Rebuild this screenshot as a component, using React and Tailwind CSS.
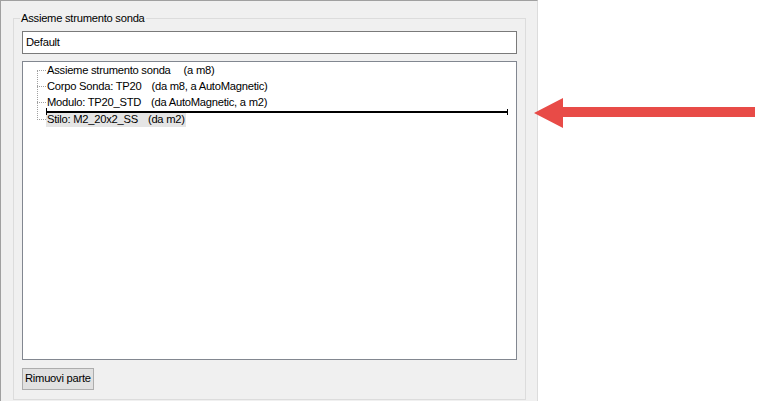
import React from "react"

const rows = [
  { name: "Assieme strumento sonda", info: "(a m8)", gap: "ml-[13px]" },
  { name: "Corpo Sonda: TP20", info: "(da m8, a AutoMagnetic)", gap: "ml-[10px]" },
  { name: "Modulo: TP20_STD", info: "(da AutoMagnetic, a m2)", gap: "ml-[10px]" },
  { name: "Stilo: M2_20x2_SS", info: "(da m2)", gap: "ml-[10px]", selected: true },
]

const App = () => {
  return (
    <div
      className="relative w-[763px] h-[401px] bg-white flex text-[11.2px] tracking-[-0.25px] text-black overflow-hidden"
      style={{ fontFamily: '"Liberation Sans", Arial, sans-serif' }}
    >
      {/* Panel */}
      <div className="w-[538px] h-full bg-[#f0f0f0] border-t border-l border-t-[#a0a0a0] border-l-[#a0a0a0] border-r border-r-[#dcdcdc] pl-[12px] pt-[9px]">
        <fieldset className="w-[513px] h-[390px] border border-[#dcdcdc] px-[8px] pt-[5px] flex flex-col">
          <legend className="ml-[-2px] px-[1px] leading-[16px]">Assieme strumento sonda</legend>

          {/* Config name */}
          <div className="h-[23px] border border-[#7a7a7a] bg-white pl-[3px] pt-[1px] flex items-center leading-none">
            Default
          </div>

          {/* Tree */}
          <div className="relative mt-[7px] h-[299px] border border-[#828790] bg-white">
            <div className="absolute left-[14px] top-[8px] h-[50px] border-l border-dotted border-[#a0a0a0]"></div>
            {rows.map((r, i) => (
              <div key={i} className="h-[16.4px] flex items-center">
                <div className="w-[9px] ml-[14px] border-t border-dotted border-[#a0a0a0]"></div>
                <span
                  className={
                    "flex px-[1px] leading-[15px] " + (r.selected ? "bg-[#e5e5e5]" : "")
                  }
                >
                  <span>{r.name}</span>
                  <span className={r.gap}>{r.info}</span>
                </span>
              </div>
            ))}

            {/* black marker line */}
            <div className="absolute left-[23px] top-[49px] w-[462px] h-[2px] bg-black"></div>
            <div className="absolute left-[23px] top-[46px] w-[1px] h-[7px] bg-black"></div>
            <div className="absolute left-[484px] top-[47px] w-[1px] h-[6px] bg-black"></div>
          </div>

          <div className="mt-[8px]">
            <button className="h-[22px] px-[2px] border border-[#adadad] bg-[#e1e1e1] leading-none">
              Rimuovi parte
            </button>
          </div>
        </fieldset>
      </div>

      {/* Red arrow */}
      <svg className="absolute left-[532px] top-[96px]" width="226" height="34" viewBox="0 0 226 34">
        <polygon points="2,17 31,2 31,11 223,11 223,21 31,21 31,32" fill="#e84b47" />
      </svg>
    </div>
  )
}

export default App
